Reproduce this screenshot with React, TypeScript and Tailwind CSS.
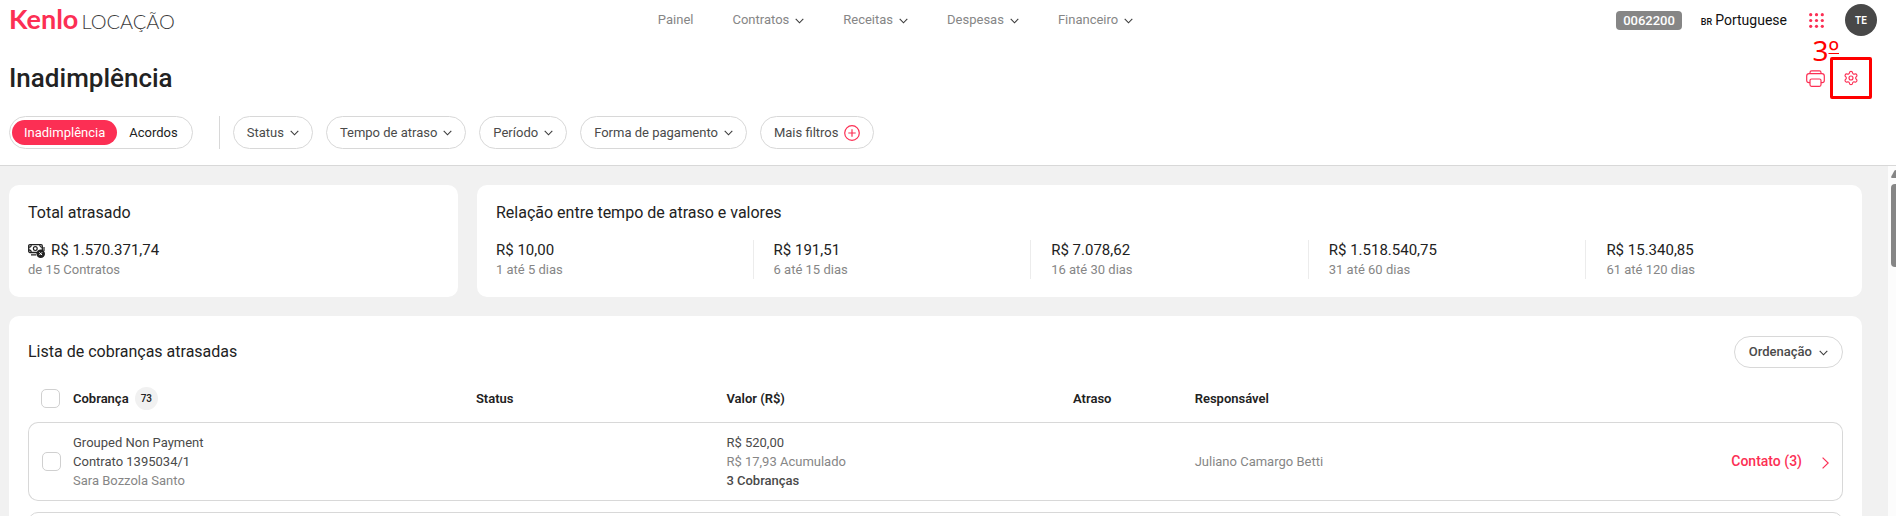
import type { ReactNode } from "react";
import { Settings } from "lucide-react";

const menus = ["Contratos", "Receitas", "Despesas", "Financeiro"];
const filters = ["Status", "Tempo de atraso", "Período", "Forma de pagamento"];
const ranges = [
  { value: "R$ 10,00", label: "1 até 5 dias" },
  { value: "R$ 191,51", label: "6 até 15 dias" },
  { value: "R$ 7.078,62", label: "16 até 30 dias" },
  { value: "R$ 1.518.540,75", label: "31 até 60 dias" },
  { value: "R$ 15.340,85", label: "61 até 120 dias" },
];

function ChevronDown() {
  return (
    <svg className="mt-px h-[6px] w-[9px] shrink-0 text-[#3c3c3c]" viewBox="0 0 9 6" fill="none" stroke="currentColor" strokeWidth="1.1" aria-hidden="true">
      <path d="M.7.8 4.5 4.8 8.3.8" />
    </svg>
  );
}

function PillButton({ children }: { children: ReactNode }) {
  return (
    <button className="flex h-[33px] items-center gap-[6px] rounded-full border border-[#d8d8d8] bg-white px-[13px] text-[13px] text-[#4a4a4a]">
      {children}
    </button>
  );
}

function PlusCircle() {
  return (
    <svg className="size-4 shrink-0 text-[#fc2f54]" viewBox="0 0 16 16" fill="none" stroke="currentColor" strokeWidth="1.2" aria-hidden="true">
      <circle cx="8" cy="8" r="7.3" />
      <path d="M8 4.3v7.4M4.3 8h7.4" />
    </svg>
  );
}

function PrinterIcon() {
  return (
    <svg className="h-[17px] w-[19px]" viewBox="0 0 19 17" fill="none" stroke="currentColor" strokeWidth="1.2" strokeLinejoin="round" aria-hidden="true">
      <path d="M4 3.6V2.4C4 1.4 4.7.8 5.6.8h7.8c.9 0 1.6.6 1.6 1.6v1.2" />
      <path d="M4 12.6H2.9C1.5 12.6.7 11.8.7 10.5V6C.7 4.5 1.6 3.6 3.1 3.6h12.800c1.500 0 2.400.9 2.400 2.400v4.500c0 1.300-.8 2.100-2.200 2.100H15" />
      <rect x="4" y="9" width="11" height="7.3" rx="1.5" />
    </svg>
  );
}

function MoneyIcon() {
  return (
    <svg className="h-[15px] w-[17px] shrink-0" viewBox="0 0 17 15" fill="none" stroke="currentColor" aria-hidden="true">
      <rect x=".7" y="1.7" width="13.6" height="7.8" rx="1.2" strokeWidth="1.3" />
      <path d="M.7 4.3A2.6 2.6 0 0 0 3.3 1.7M14.3 4.3a2.6 2.6 0 0 1-2.6-2.6M.7 6.9a2.6 2.6 0 0 1 2.6 2.6" strokeWidth="1.1" />
      <circle cx="7.3" cy="5.6" r="1.9" strokeWidth="1.2" />
      <path d="M16 4v4M3 11.9h5" strokeWidth="1.2" />
      <circle cx="12.7" cy="10.7" r="4.3" fill="currentColor" stroke="none" />
      <path d="m11.3 9.3 2.8 2.8M14.1 9.3l-2.8 2.8" stroke="white" strokeWidth="1" />
    </svg>
  );
}

function Tick({ label }: { label: string }) {
  return (
    <input type="checkbox" aria-label={label} className="block size-[19px] appearance-none rounded-[5px] border border-[#d0d0d0] bg-white" />
  );
}

export default function App() {
  return (
    <div className="flex h-screen flex-col overflow-hidden bg-white font-['Roboto','Noto_Sans',sans-serif] text-[#222]">
      <header className="flex h-10 shrink-0 items-center justify-between pr-[19px] pl-[9px]">
        <a href="#" className="flex items-baseline gap-[3px] font-['Lato',sans-serif] leading-8" aria-label="Kenlo Locação">
          <span className="text-[27px] font-bold text-[#fc2f54]">Kenlo</span>
          <span className="text-[20px] font-light text-[#3c3c3c]">LOCAÇÃO</span>
        </a>
        <nav className="flex items-center gap-[39px] text-[13px] text-[#868686]">
          <a href="#">Painel</a>
          {menus.map((item) => (
            <button key={item} className="flex items-center gap-[6px]">
              {item}
              <ChevronDown />
            </button>
          ))}
        </nav>
        <div className="flex items-center">
          <span className="rounded-[4px] bg-[#868686] px-[7px] text-[13px] leading-[19px] font-medium text-white">0062200</span>
          <button className="ml-[19px] flex items-baseline gap-[3px] text-[14px] text-[#111]">
            <span className="text-[9px] font-medium">BR</span>
            Portuguese
          </button>
          <button className="ml-[22px] text-[#fc2f54]" aria-label="Aplicativos">
            <svg className="size-[15px]" viewBox="0 0 15 15" fill="currentColor" aria-hidden="true">
              {[1.7, 7.5, 13.3].map((y) => [1.7, 7.5, 13.3].map((x) => <circle key={`${x}-${y}`} cx={x} cy={y} r="1.6" />))}
            </svg>
          </button>
          <button className="ml-[21px] size-8 rounded-full bg-[#484848] text-[10px] font-semibold text-white">TE</button>
        </div>
      </header>

      <section className="shrink-0 border-b border-[#d8d8d8] pr-[37px] pb-4 pl-[9px]">
        <div className="flex h-[76px] items-center justify-between">
          <h1 className="text-[26px] font-medium">Inadimplência</h1>
          <div className="flex items-center gap-[18px] text-[#fc2f54]">
            <button aria-label="Imprimir">
              <PrinterIcon />
            </button>
            <div className="relative">
              <button className="block" aria-label="Configurações">
                <Settings className="size-4" strokeWidth={1.7} />
              </button>
              <div className="pointer-events-none absolute -inset-[13px] rounded-[2px] border-3 border-[#ff0000]" />
              <span className="pointer-events-none absolute -top-9 right-5 flex font-['Noto_Sans',sans-serif] text-[28px] leading-8 text-[#ff0000]">
                3<span className="underline decoration-1 underline-offset-[-8px] [text-decoration-skip-ink:none]">º</span>
              </span>
            </div>
          </div>
        </div>
        <div className="flex items-center gap-[13px]">
          <div className="flex h-[33px] items-center rounded-full border border-[#d8d8d8] px-[2px] text-[13px]">
            <button className="h-[25px] rounded-full bg-[#fc2f54] px-3 text-white">Inadimplência</button>
            <button className="px-3 text-[#222]">Acordos</button>
          </div>
          <div className="ml-[13px] h-[33px] w-px bg-[#d8d8d8]" />
          {filters.map((name) => (
            <PillButton key={name}>
              {name}
              <ChevronDown />
            </PillButton>
          ))}
          <PillButton>
            Mais filtros
            <PlusCircle />
          </PillButton>
        </div>
      </section>

      <div className="flex min-h-0 flex-1 bg-[#f1f1f1]">
        <main className="min-w-0 flex-1 overflow-hidden pt-[19px] pr-[26px] pl-[9px]">
          <div className="grid grid-cols-[449fr_1385fr] gap-[19px]">
            <section className="h-28 rounded-[10px] bg-white px-[19px] pt-4">
              <h2 className="text-[16px] leading-6">Total atrasado</h2>
              <p className="mt-[15px] flex items-center gap-[6px] text-[15px] leading-5">
                <MoneyIcon />
                R$ 1.570.371,74
              </p>
              <p className="text-[13px] leading-[19px] text-[#868686]">de 15 Contratos</p>
            </section>
            <section className="h-28 rounded-[10px] bg-white px-[19px] pt-4">
              <h2 className="text-[16px] leading-6">Relação entre tempo de atraso e valores</h2>
              <div className="mt-[15px] flex">
                {ranges.map((range) => (
                  <div key={range.label} className="flex-1 border-l border-[#ececec] px-5 first:border-l-0 first:pl-0 last:pr-0">
                    <p className="text-[15px] leading-5">{range.value}</p>
                    <p className="text-[13px] leading-[19px] text-[#868686]">{range.label}</p>
                  </div>
                ))}
              </div>
            </section>
          </div>

          <section className="mt-[19px] rounded-[10px] bg-white px-[19px] pt-5">
            <div className="flex items-center justify-between">
              <h2 className="text-[16px]">Lista de cobranças atrasadas</h2>
              <button className="flex h-8 items-center gap-[7px] rounded-full border border-[#d8d8d8] px-[14px] text-[13px] font-medium text-[#4a4a4a]">
                Ordenação
                <ChevronDown />
              </button>
            </div>
            <table className="mt-[6px] w-full table-fixed border-separate border-spacing-x-0 border-spacing-y-[11px] text-left text-[13px] leading-[19px]">
              <colgroup>
                <col className="w-[45px]" />
                <col className="w-[22.2%]" />
                <col className="w-[13.8%]" />
                <col className="w-[19.1%]" />
                <col className="w-[6.7%]" />
                <col />
              </colgroup>
              <thead>
                <tr className="h-[26px]">
                  <th className="pl-[13px]">
                    <Tick label="Selecionar todas" />
                  </th>
                  <th className="font-semibold">
                    <span className="flex items-center gap-[6px]">
                      Cobrança
                      <span className="rounded-full bg-[#f1f1f1] px-[6px] text-[10px] leading-[23px] font-medium">73</span>
                    </span>
                  </th>
                  <th className="font-semibold">Status</th>
                  <th className="font-semibold">Valor (R$)</th>
                  <th className="font-semibold">Atraso</th>
                  <th className="font-semibold">Responsável</th>
                </tr>
              </thead>
              <tbody>
                <tr className="h-[79px] text-[#868686] [&>td]:border-y [&>td]:border-[#d8d8d8]">
                  <td className="rounded-l-[10px] border-l pl-[13px]">
                    <Tick label="Selecionar contrato 1395034/1" />
                  </td>
                  <td>
                    <p className="text-[#4a4a4a]">Grouped Non Payment</p>
                    <p className="text-[#4a4a4a]">Contrato 1395034/1</p>
                    <p>Sara Bozzola Santo</p>
                  </td>
                  <td />
                  <td>
                    <p className="text-[#4a4a4a]">R$ 520,00</p>
                    <p>R$ 17,93 Acumulado</p>
                    <p className="font-medium text-[#4a4a4a]">3 Cobranças</p>
                  </td>
                  <td />
                  <td className="rounded-r-[10px] border-r pr-[13px]">
                    <div className="flex items-center justify-between">
                      Juliano Camargo Betti
                      <button className="flex items-center gap-5 text-[14px] font-medium text-[#fc2f54]">
                        Contato (3)
                        <svg className="mt-[2px] h-3 w-[7px]" viewBox="0 0 7 12" fill="none" stroke="currentColor" strokeWidth="1.2" aria-hidden="true">
                          <path d="m.6.6 5.6 5.4L.6 11.4" />
                        </svg>
                      </button>
                    </div>
                  </td>
                </tr>
                <tr className="h-[79px]">
                  <td colSpan={6} className="rounded-[10px] border border-[#d8d8d8]" />
                </tr>
              </tbody>
            </table>
          </section>
        </main>
        <div className="flex w-2 shrink-0 flex-col items-end gap-[6px] overflow-hidden bg-[#fcfcfc] pt-1" aria-hidden="true">
          <svg className="h-2 w-[5px]" viewBox="0 0 5 8" fill="#868686">
            <path d="M5 0v8H1Q-.3 8 .4 6.3L3.5.6Q4 0 5 0Z" />
          </svg>
          <div className="h-[83px] w-[5px] rounded-l-[4px] bg-[#868686]" />
        </div>
      </div>
    </div>
  );
}
